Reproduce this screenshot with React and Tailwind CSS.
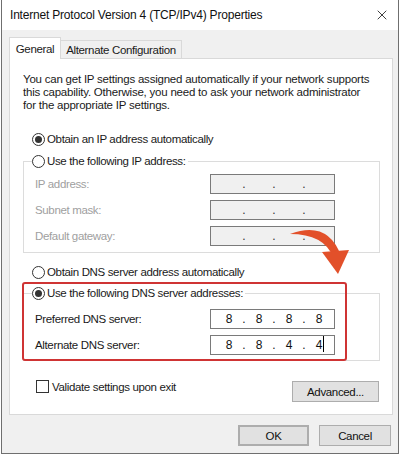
import { X } from 'lucide-react'

const font = { fontFamily: '"Segoe UI", "Liberation Sans", Arial, sans-serif' }

function Radio({ checked }) {
  return (
    <span className="flex h-[13px] w-[13px] shrink-0 items-center justify-center rounded-full border border-[#333] bg-white">
      {checked && <span className="h-[7px] w-[7px] rounded-full bg-[#333]" />}
    </span>
  )
}

function IpBox({ parts, disabled, cursor }) {
  return (
    <div
      className={`flex h-[20px] w-[125px] items-center border border-[#7a7a7a] px-[5px] text-[12px] tracking-normal ${
        disabled ? 'bg-[#f0f0f0] text-[#333]' : 'bg-white text-[#111]'
      }`}
    >
      {parts.map((p, i) => (
        <div key={i} className="flex items-center">
          <span className="relative w-[26px] text-center leading-none">
            {p}
            {cursor && i === 3 && (
              <span className="absolute right-[8px] top-[-3px] h-[16px] w-px bg-black" />
            )}
          </span>
          {i < 3 && <span className="w-[4px] text-center leading-none">.</span>}
        </div>
      ))}
    </div>
  )
}

function Row({ label, parts, disabled, cursor }) {
  return (
    <div className="flex h-[26px] items-center pl-[11px]">
      <span className={`w-[175px] ${disabled ? 'text-[#a0a0a0]' : 'text-[#1a1a1a]'}`}>{label}</span>
      <IpBox parts={parts} disabled={disabled} cursor={cursor} />
    </div>
  )
}

function Button({ children, className = '' }) {
  return (
    <button
      type="button"
      className={`flex items-center justify-center border border-[#adadad] bg-[#e1e1e1] text-[11.5px] text-[#111] ${className}`}
    >
      {children}
    </button>
  )
}

export default function App() {
  const empty = ['', '', '', '']
  return (
    <div className="h-[455px] w-[400px] bg-white px-px pb-px" style={font}>
      <div className="relative flex h-full flex-col border-x border-b border-[#6f6f6f] text-[11.5px] leading-[14px] tracking-[-0.35px] text-[#1a1a1a]">
        {/* title bar */}
        <div className="flex h-[30px] shrink-0 items-center justify-between bg-white pl-[8px] pr-[8px]">
          <span className="text-[12px] tracking-[-0.2px] text-[#111]">Internet Protocol Version 4 (TCP/IPv4) Properties</span>
          <X size={16} strokeWidth={1.3} className="text-[#222]" />
        </div>

        <div className="flex flex-1 flex-col bg-[#f0f0f0] px-[7px] pt-[7px]">
          {/* tabs */}
          <div className="relative z-10 flex h-[21px] items-end">
            <div className="-mb-px flex h-[22px] w-[52px] items-center justify-center border border-b-0 border-[#d9d9d9] bg-white">
              General
            </div>
            <div className="flex h-[18px] w-[121px] items-center justify-center border border-b-0 border-l-0 border-[#d9d9d9] bg-[#f0f0f0]">
              Alternate Configuration
            </div>
          </div>

          {/* panel */}
          <div className="relative h-[357px] w-[384px] border border-[#d9d9d9] bg-white pt-[14px]">
            <p className="pl-[13px] pr-[22px] leading-[13px] tracking-[-0.22px]">
              You can get IP settings assigned automatically if your network supports this capability. Otherwise, you need to ask your network administrator for the appropriate IP settings.
            </p>

            <div className="mt-[20px] flex h-[14px] items-center gap-[2px] pl-[22px]">
              <Radio checked />
              <span>Obtain an IP address automatically</span>
            </div>

            <fieldset className="ml-[13px] mt-[8px] w-[357px] border border-[#dcdcdc] pb-[3px]">
              <legend className="ml-[8px] flex h-[14px] items-center gap-[2px] bg-white pr-[2px]">
                <Radio />
                <span>Use the following IP address:</span>
              </legend>
              <div className="mt-[3px]">
                <Row label="IP address:" parts={empty} disabled />
                <Row label="Subnet mask:" parts={empty} disabled />
                <Row label="Default gateway:" parts={empty} disabled />
              </div>
            </fieldset>

            <div className="mt-[12px] flex h-[14px] items-center gap-[2px] pl-[22px]">
              <Radio />
              <span>Obtain DNS server address automatically</span>
            </div>

            <fieldset className="ml-[13px] mt-[7px] w-[357px] border border-[#dcdcdc] pb-[2px]">
              <legend className="ml-[8px] flex h-[14px] items-center gap-[2px] bg-white pr-[2px]">
                <Radio checked />
                <span>Use the following DNS server addresses:</span>
              </legend>
              <div className="mt-[6px]">
                <Row label="Preferred DNS server:" parts={['8', '8', '8', '8']} />
                <Row label="Alternate DNS server:" parts={['8', '8', '4', '4']} cursor />
              </div>
            </fieldset>

            <div className="mt-[19px] flex items-start justify-between pl-[26px] pr-[13px]">
              <div className="flex h-[13px] items-center gap-[3px]">
                <span className="h-[13px] w-[13px] border border-[#333] bg-white" />
                <span>Validate settings upon exit</span>
              </div>
              <Button className="mt-px h-[21px] w-[87px]">Advanced...</Button>
            </div>

            {/* red highlight */}
            <div className="pointer-events-none absolute left-[12px] top-[223px] h-[79px] w-[325px] rounded-[3px] border-2 border-[#cf3434]" />
          </div>

          {/* footer buttons */}
          <div className="flex justify-end gap-[10px] pt-[10px]">
            <Button className="h-[21px] w-[71px] border-2 border-[#0078d7]">OK</Button>
            <Button className="h-[21px] w-[72px]">Cancel</Button>
          </div>
        </div>

        {/* curved arrow */}
        <svg className="pointer-events-none absolute left-0 top-0" width="400" height="455" viewBox="0 0 400 455">
          <path d="M288 234 Q326 220 339 256 L331 257 Q322 234 288 234 Z" fill="#e2502a" />
          <path d="M320 252 L347 250 L336 274 Z" fill="#e2502a" />
        </svg>
      </div>
    </div>
  )
}
